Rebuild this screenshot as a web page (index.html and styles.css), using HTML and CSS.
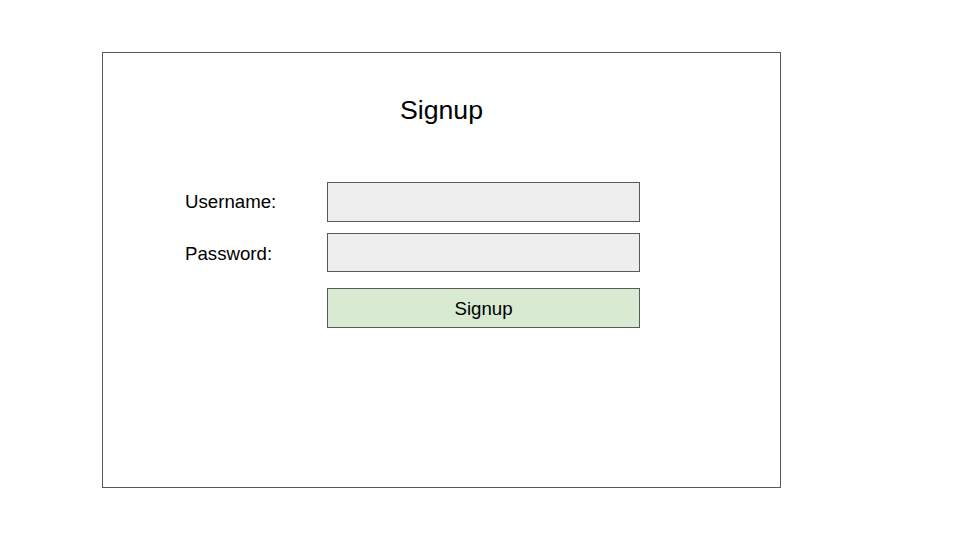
FILE: index.html
```html
<!DOCTYPE html>
<html>
<head>
<meta charset="utf-8">
<link rel="stylesheet" href="styles.css">
</head>
<body>
<div class="frame">
  <h1 class="title">Signup</h1>
  <form class="form">
    <label class="label row-user">Username:</label>
    <div class="field row-user"></div>
    <label class="label row-pass">Password:</label>
    <div class="field row-pass"></div>
    <div class="button row-btn">Signup</div>
  </form>
</div>
</body>
</html>
```
FILE: styles.css
```css
html, body {
  margin: 0;
  padding: 0;
  background: #ffffff;
  font-family: "Liberation Sans", Arial, sans-serif;
  color: #000000;
}
body {
  width: 960px;
  height: 540px;
  overflow: hidden;
}
.frame {
  box-sizing: border-box;
  margin: 52px 0 0 102px;
  width: 679px;
  height: 436px;
  border: 1px solid #595959;
  padding-top: 42px;
}
.title {
  margin: 0;
  font-size: 26.67px;
  font-weight: normal;
  line-height: 30px;
  text-align: center;
}
.form {
  margin: 57px 0 0 82px;
  display: grid;
  grid-template-columns: 142px 313px;
  grid-template-rows: 40px 11px 39px 16px 40px;
}
.label {
  grid-column: 1;
  font-size: 18.67px;
  display: flex;
  align-items: center;
}
.row-user { grid-row: 1; }
.row-pass { grid-row: 3; }
.label.row-pass { padding-top: 2px; }
.row-btn { grid-row: 5; }
.field {
  grid-column: 2;
  box-sizing: border-box;
  border: 1px solid #595959;
  background: #eeeeee;
}
.button {
  grid-column: 2;
  box-sizing: border-box;
  border: 1px solid #595959;
  background: #d9ead3;
  font-size: 18.67px;
  padding-top: 2px;
  display: flex;
  align-items: center;
  justify-content: center;
}
```
